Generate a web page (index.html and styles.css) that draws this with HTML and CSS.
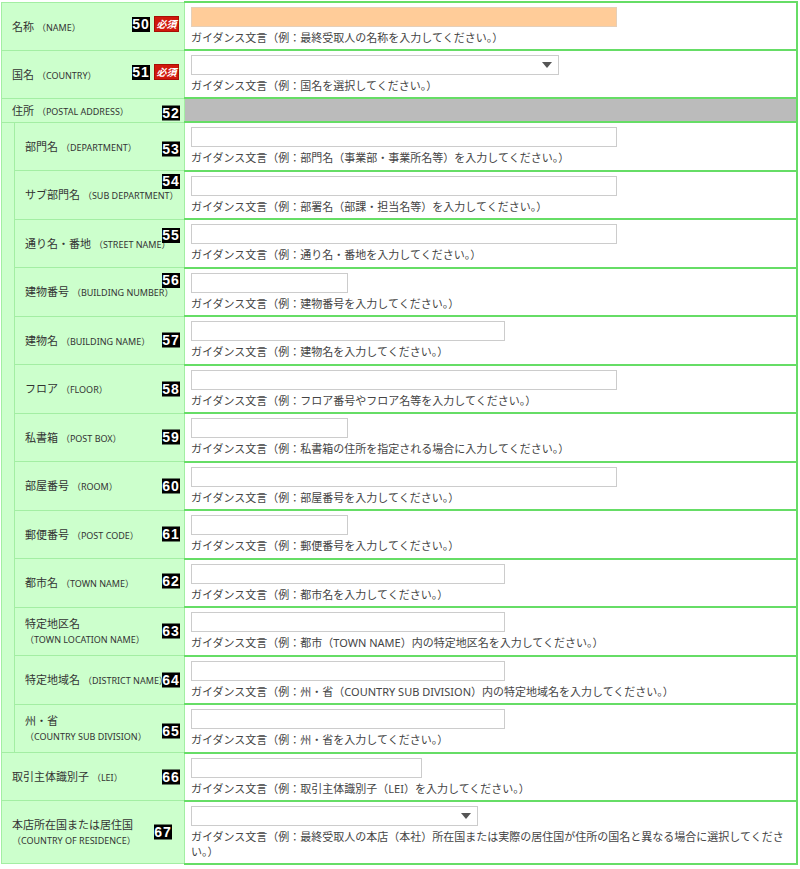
FILE: index.html
```html
<!DOCTYPE html>
<html lang="ja">
<head>
  <meta charset="UTF-8" />
  <title>最終受取人 入力項目</title>
  <link rel="stylesheet" href="styles.css">
</head>
<body>
  <table class="form">
    <colgroup>
      <col class="col-indent">
      <col class="col-label">
      <col>
    </colgroup>

    <tbody>
      <!-- 名称 -->
      <tr>
        <th colspan="2">名称 <span class="en">（NAME）</span>
          <span class="marks marks-req"><span class="no">50</span><span class="req">必須</span></span>
        </th>
        <td>
          <input class="field field-l field-req" type="text">
          <p class="guide">ガイダンス文言（例：最終受取人の名称を入力してください。）</p>
        </td>
      </tr>

      <!-- 国名 -->
      <tr>
        <th colspan="2">国名 <span class="en">（COUNTRY）</span>
          <span class="marks marks-req"><span class="no">51</span><span class="req">必須</span></span>
        </th>
        <td>
          <span class="select select-country"></span>
          <p class="guide">ガイダンス文言（例：国名を選択してください。）</p>
        </td>
      </tr>

      <!-- 住所 -->
      <tr>
        <th colspan="2">住所 <span class="en">（POSTAL ADDRESS）</span>
          <span class="marks marks-low"><span class="no">52</span></span>
        </th>
        <td class="blank"></td>
      </tr>
    </tbody>

    <!-- 住所の内訳 -->
    <tbody class="address">
      <tr>
        <th rowspan="13" class="indent"></th>
        <th>部門名 <span class="en">（DEPARTMENT）</span>
          <span class="marks marks-low"><span class="no">53</span></span>
        </th>
        <td>
          <input class="field field-l" type="text">
          <p class="guide">ガイダンス文言（例：部門名（事業部・事業所名等）を入力してください。）</p>
        </td>
      </tr>
      <tr>
        <th>サブ部門名 <span class="en">（SUB DEPARTMENT）</span>
          <span class="marks marks-top"><span class="no">54</span></span>
        </th>
        <td>
          <input class="field field-l" type="text">
          <p class="guide">ガイダンス文言（例：部署名（部課・担当名等）を入力してください。）</p>
        </td>
      </tr>
      <tr>
        <th>通り名・番地 <span class="en">（STREET NAME）</span>
          <span class="marks marks-high"><span class="no">55</span></span>
        </th>
        <td>
          <input class="field field-l" type="text">
          <p class="guide">ガイダンス文言（例：通り名・番地を入力してください。）</p>
        </td>
      </tr>
      <tr>
        <th>建物番号 <span class="en">（BUILDING NUMBER）</span>
          <span class="marks marks-mid"><span class="no">56</span></span>
        </th>
        <td>
          <input class="field field-s" type="text">
          <p class="guide">ガイダンス文言（例：建物番号を入力してください。）</p>
        </td>
      </tr>
      <tr>
        <th>建物名 <span class="en">（BUILDING NAME）</span>
          <span class="marks"><span class="no">57</span></span>
        </th>
        <td>
          <input class="field field-m" type="text">
          <p class="guide">ガイダンス文言（例：建物名を入力してください。）</p>
        </td>
      </tr>
      <tr>
        <th>フロア <span class="en">（FLOOR）</span>
          <span class="marks"><span class="no">58</span></span>
        </th>
        <td>
          <input class="field field-l" type="text">
          <p class="guide">ガイダンス文言（例：フロア番号やフロア名等を入力してください。）</p>
        </td>
      </tr>
      <tr>
        <th>私書箱 <span class="en">（POST BOX）</span>
          <span class="marks"><span class="no">59</span></span>
        </th>
        <td>
          <input class="field field-s" type="text">
          <p class="guide">ガイダンス文言（例：私書箱の住所を指定される場合に入力してください。）</p>
        </td>
      </tr>
      <tr>
        <th>部屋番号 <span class="en">（ROOM）</span>
          <span class="marks"><span class="no">60</span></span>
        </th>
        <td>
          <input class="field field-l" type="text">
          <p class="guide">ガイダンス文言（例：部屋番号を入力してください。）</p>
        </td>
      </tr>
      <tr>
        <th>郵便番号 <span class="en">（POST CODE）</span>
          <span class="marks"><span class="no">61</span></span>
        </th>
        <td>
          <input class="field field-s" type="text">
          <p class="guide">ガイダンス文言（例：郵便番号を入力してください。）</p>
        </td>
      </tr>
      <tr>
        <th>都市名 <span class="en">（TOWN NAME）</span>
          <span class="marks marks-up"><span class="no">62</span></span>
        </th>
        <td>
          <input class="field field-m" type="text">
          <p class="guide">ガイダンス文言（例：都市名を入力してください。）</p>
        </td>
      </tr>
      <tr>
        <th>特定地区名<br><span class="en">（TOWN LOCATION NAME）</span>
          <span class="marks"><span class="no">63</span></span>
        </th>
        <td>
          <input class="field field-m" type="text">
          <p class="guide">ガイダンス文言（例：都市（TOWN NAME）内の特定地区名を入力してください。）</p>
        </td>
      </tr>
      <tr>
        <th>特定地域名 <span class="en">（DISTRICT NAME）</span>
          <span class="marks"><span class="no">64</span></span>
        </th>
        <td>
          <input class="field field-m" type="text">
          <p class="guide">ガイダンス文言（例：州・省（COUNTRY SUB DIVISION）内の特定地域名を入力してください。）</p>
        </td>
      </tr>
      <tr>
        <th>州・省<br><span class="en">（COUNTRY SUB DIVISION）</span>
          <span class="marks marks-low"><span class="no">65</span></span>
        </th>
        <td>
          <input class="field field-m" type="text">
          <p class="guide">ガイダンス文言（例：州・省を入力してください。）</p>
        </td>
      </tr>
    </tbody>

    <tbody>
      <!-- LEI -->
      <tr>
        <th colspan="2">取引主体識別子 <span class="en">（LEI）</span>
          <span class="marks"><span class="no">66</span></span>
        </th>
        <td>
          <input class="field field-lei" type="text">
          <p class="guide">ガイダンス文言（例：取引主体識別子（LEI）を入力してください。）</p>
        </td>
      </tr>

      <!-- 本店所在国 -->
      <tr>
        <th colspan="2">本店所在国または居住国<br><span class="en">（COUNTRY OF RESIDENCE）</span>
          <span class="marks marks-far"><span class="no">67</span></span>
        </th>
        <td>
          <span class="select select-residence"></span>
          <p class="guide">ガイダンス文言（例：最終受取人の本店（本社）所在国または実際の居住国が住所の国名と異なる場合に選択してください。）</p>
        </td>
      </tr>
    </tbody>
  </table>
</body>
</html>
```

FILE: styles.css
```css
html, body {
  margin: 0;
}
body {
  padding: 1px 0 0 1px;
  background: #fff;
  color: #333;
  font-family: "Noto Sans", "Noto Sans CJK JP", sans-serif;
}

/* フォーム表 */
.form {
  border-collapse: collapse;
  table-layout: fixed;
  width: 797px;
}
.col-indent { width: 13px; }
.col-label { width: 170px; }

.form th {
  position: relative;
  background: #ccffcc;
  border: 1px solid #a3eea3;
  text-align: left;
  font-weight: normal;
  font-size: 11px;
  line-height: 15px;
  padding: 4px 10px;
  vertical-align: middle;
  white-space: nowrap;
}
.form th.indent {
  padding: 0;
}
.form td {
  border: 2px solid #66dd66;
  border-left: 0;
  padding: 4px 6px;
  vertical-align: top;
}
.form td.blank {
  background: #bbbbbb;
  padding: 0;
}
.en {
  font-size: 9px;
  line-height: 1;
}

/* 入力欄 */
.field {
  display: block;
  box-sizing: border-box;
  height: 20px;
  margin: 0;
  padding: 0 4px;
  border: 1px solid #cccccc;
  background: #fff;
}
.field-l { width: 426px; }
.field-m { width: 314px; }
.field-s { width: 157px; }
.field-lei { width: 231px; }
.field-req {
  background: #ffcc99;
  border-color: #e6cfb8;
}

.select {
  position: relative;
  display: block;
  box-sizing: border-box;
  height: 20px;
  border: 1px solid #cccccc;
  background: #fff;
}
.select::after {
  content: "";
  position: absolute;
  right: 6px;
  top: 6px;
  border-left: 5px solid transparent;
  border-right: 5px solid transparent;
  border-top: 6px solid #555;
}
.select-country { width: 368px; }
.select-residence { width: 287px; }

.guide {
  margin: 3px 0 0;
  font-size: 11px;
  line-height: 15px;
  color: #444;
}
.address .guide {
  line-height: 15.5px;
}

/* 項目番号 */
.marks {
  position: absolute;
  right: 4px;
  top: 50%;
  transform: translateY(-50%);
  display: flex;
  align-items: center;
  gap: 4px;
}
.marks-req { right: 5px; margin-top: -2px; }
.marks-low { margin-top: 3px; }
.marks-up { margin-top: -2px; }
.marks-top { top: 3px; transform: none; }
.marks-high { top: 8px; transform: none; }
.marks-mid { top: 5px; transform: none; }
.marks-far { right: 12px; }

.no {
  display: block;
  width: 18px;
  height: 15px;
  background: #000;
  color: #fff;
  font: bold 14px/15px "Liberation Sans Narrow", "Liberation Sans", sans-serif;
  letter-spacing: 1px;
  text-align: center;
  overflow: hidden;
}
.req {
  display: block;
  width: 25px;
  height: 16px;
  background: #d0180c;
  border: 1px solid #a80e06;
  box-sizing: border-box;
  color: #fff;
  font-size: 10px;
  line-height: 14px;
  font-style: italic;
  font-weight: bold;
  text-align: center;
}
```
